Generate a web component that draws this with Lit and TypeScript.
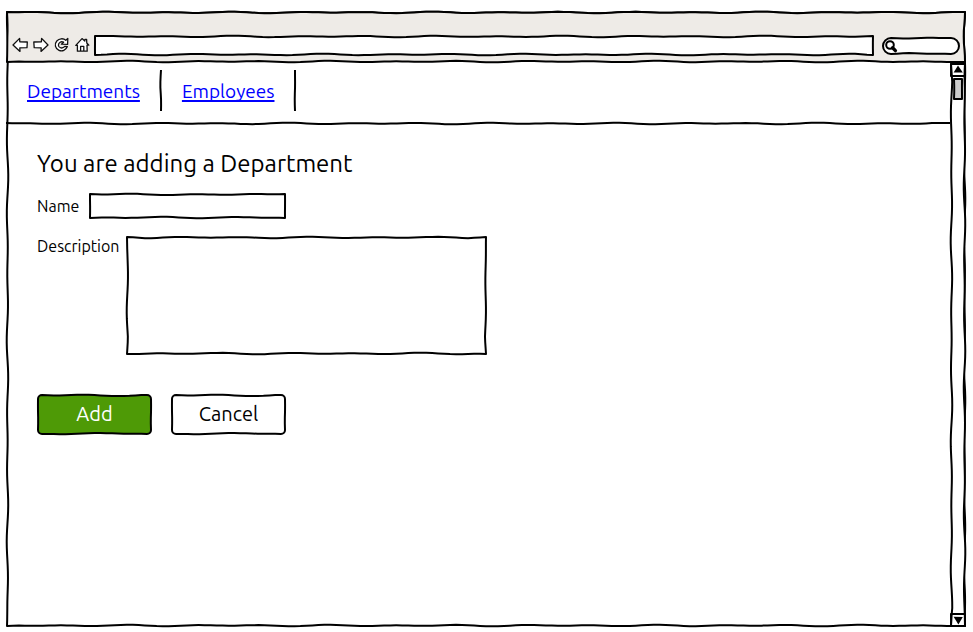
import { LitElement, html, svg, css, nothing } from "lit";
import { customElement, property, state } from "lit/decorators.js";

type Point = [number, number];

/** Points along a hand-drawn edge; the wobble fades out towards both ends. */
function wobble(from: Point, to: Point, seed: number): Point[] {
  const dx = to[0] - from[0];
  const dy = to[1] - from[1];
  const length = Math.hypot(dx, dy);
  if (length < 1) return [from, to];
  const steps = Math.max(2, Math.round(length / 6));
  const normal: Point = [-dy / length, dx / length];
  const amp = Math.min(0.8, length / 50);
  const points: Point[] = [];
  for (let i = 0; i <= steps; i++) {
    const s = (length * i) / steps;
    const fade = Math.min(1, s / 18, (length - s) / 18);
    const wave = 0.6 + 0.6 * Math.sin(s / 10.5 + seed) + 0.4 * Math.sin(s / 17 + seed * 2.3);
    const off = amp * fade * wave;
    points.push([from[0] + (dx * s) / length + normal[0] * off, from[1] + (dy * s) / length + normal[1] * off]);
  }
  return points;
}

const trace = (points: Point[]) => points.map(([x, y]) => `L${x.toFixed(2)} ${y.toFixed(2)}`).join("");

/** Box with a hand-drawn outline around its slotted content. */
@customElement("sketch-box")
export class SketchBox extends LitElement {
  @property() fill = "none";
  @property({ type: Number }) radius = 0;
  @property({ type: Number }) seed = 0;
  @property() shape: "box" | "row" | "column" = "box";
  @state() private w = 0;
  @state() private h = 0;

  private observer?: ResizeObserver;

  static styles = css`
    :host {
      display: block;
      position: relative;
      box-sizing: border-box;
    }
    .outline {
      position: absolute;
      inset: 0;
      width: 100%;
      height: 100%;
      overflow: visible;
      pointer-events: none;
      z-index: 0;
    }
    ::slotted(*) {
      position: relative;
      z-index: 1;
    }
  `;

  connectedCallback() {
    super.connectedCallback();
    this.observer = new ResizeObserver(() => {
      this.w = this.offsetWidth;
      this.h = this.offsetHeight;
    });
    this.observer.observe(this);
  }

  disconnectedCallback() {
    this.observer?.disconnect();
    super.disconnectedCallback();
  }

  private path(): string {
    const { w, h, radius: r, seed } = this;
    if (this.shape === "row") return "M" + trace(wobble([0, 1], [w, 1], seed)).slice(1);
    if (this.shape === "column") return "M" + trace(wobble([1, 0], [1, h], seed)).slice(1);
    const a = 1;
    const x = w - 1;
    const y = h - 1;
    const corner = (cx: number, cy: number) => (r ? `A${r} ${r} 0 0 1 ${cx} ${cy}` : "");
    return (
      `M${a + r} ${a}` +
      trace(wobble([a + r, a], [x - r, a], seed)) +
      corner(x, a + r) +
      trace(wobble([x, a + r], [x, y - r], seed + 3.6)) +
      corner(x - r, y) +
      trace(wobble([x - r, y], [a + r, y], seed + 1.7)) +
      corner(a, y - r) +
      trace(wobble([a, y - r], [a, a + r], seed + 0.8)) +
      corner(a + r, a) +
      "Z"
    );
  }

  render() {
    return html`
      ${this.w
        ? html`<svg class="outline" aria-hidden="true">
            ${svg`<path d=${this.path()} fill=${this.fill} stroke="#000" stroke-width="2" stroke-linejoin="round"></path>`}
          </svg>`
        : nothing}
      <slot></slot>
    `;
  }
}

const icons = [
  {
    label: "Back",
    art: svg`<path d="M1 8 L7.6 1.4 L7.8 4.8 L15.3 5 L15 10.6 L7.8 10.8 L8 14.4 Z"></path>`,
  },
  {
    label: "Forward",
    art: svg`<path d="M15 8 L8.6 1.4 L8.4 4.8 L0.8 5 L1.2 10.6 L8.2 10.8 L8 14.4 Z"></path>`,
  },
  {
    label: "Reload",
    art: svg`<path d="M13.8 1.4 L13.6 7.4 L7.4 7.2 L9.6 5.2 C7.2 4 4.4 5.4 4.4 8.2 C4.6 11.2 8.6 12 10.8 9.4 L13.4 9.6 C11.8 13.4 8.2 14.8 5 13.4 C1 11.6 0.2 7 2.8 4 C5.2 1.4 9.2 1 11.8 3.2 Z"></path>`,
  },
  {
    label: "Home",
    art: svg`<path d="M0.8 8.4 L7 1.6 L9.8 4 L10 2.4 L11.6 2.4 L11.8 6 L13.8 8.2 L12 8.2 L12.2 14.2 L2.4 14.2 L2.4 8.2 Z"></path><path d="M5.6 14 L5.6 9.4 L8.8 9.4 L8.8 14" fill="none"></path>`,
  },
];

@customElement("app-root")
export class AppRoot extends LitElement {
  static styles = css`
    :host {
      display: flex;
      flex-direction: column;
      box-sizing: border-box;
      min-height: 100vh;
      padding: 11px 7px 5px 6px;
      background: #fff;
      color: #000;
      font: 16px/22px Ubuntu, "Noto Sans", sans-serif;
    }
    *,
    *::before {
      box-sizing: border-box;
    }
    .window {
      flex: 1;
      display: flex;
      flex-direction: column;
    }
    .toolbar {
      display: flex;
      align-items: center;
      gap: 8px;
      padding: 24px 6px 7px;
    }
    .tools {
      display: flex;
      gap: 5px;
      margin-right: -5px;
      padding-bottom: 2px;
    }
    button,
    input,
    textarea {
      display: block;
      margin: 0;
      padding: 0;
      border: 0;
      outline: 0;
      background: none;
      color: inherit;
      font: inherit;
    }
    button {
      cursor: pointer;
    }
    .tool,
    .tool svg {
      display: block;
      width: 16px;
      height: 16px;
    }
    .tool svg {
      fill: #fff;
      stroke: #111;
      stroke-width: 1.3;
      stroke-linejoin: round;
    }
    .address {
      flex: 1;
      height: 21px;
    }
    .search {
      display: flex;
      width: 78px;
      height: 18px;
    }
    .search svg {
      flex: none;
      width: 16px;
      height: 18px;
    }
    .field {
      width: 100%;
      height: 100%;
      padding: 0 6px;
      resize: none;
    }
    .search .field {
      min-width: 0;
      padding: 0 4px;
    }
    .viewport {
      flex: 1;
      display: flex;
    }
    .page {
      flex: 1;
      min-width: 0;
    }
    .nav {
      display: flex;
      align-items: center;
      gap: 20px;
      height: 59px;
      padding: 0 21px 4px;
      font-size: 19px;
    }
    .nav a {
      color: #00f;
      text-decoration-thickness: 2px;
      text-decoration-skip-ink: none;
      text-underline-offset: 2px;
    }
    .divider {
      width: 2px;
      height: 41px;
    }
    .rule {
      height: 2px;
    }
    .content {
      padding: 24px 31px;
    }
    h1 {
      margin: 0 0 13px;
      font-size: 24px;
      line-height: 32px;
      font-weight: 400;
    }
    .row {
      display: flex;
      align-items: flex-start;
      gap: 6px;
      margin-bottom: 17px;
    }
    .row.short {
      align-items: center;
      gap: 10px;
    }
    .name {
      width: 197px;
      height: 26px;
    }
    .description {
      flex: 0 1 361px;
      height: 119px;
    }
    .row label {
      line-height: 20px;
    }
    .actions {
      display: flex;
      gap: 19px;
      margin-top: 39px;
    }
    .action {
      width: 115px;
      height: 41px;
      font-size: 20px;
    }
    .action button {
      width: 100%;
      height: 100%;
      padding-bottom: 2px;
    }
    .primary {
      color: #fff;
    }
    .scrollbar {
      display: flex;
      flex-direction: column;
      justify-content: space-between;
      width: 16px;
    }
    .step {
      width: 16px;
      height: 14px;
    }
    .step button,
    .step svg {
      display: block;
      width: 16px;
      height: 14px;
    }
    .thumb {
      width: 10px;
      height: 22px;
      margin: 1px 3px auto;
    }
  `;

  render() {
    return html`
      <sketch-box class="window" seed="2">
        <sketch-box class="toolbar" fill="#eeebe7" seed="2">
          <div class="tools">
            ${icons.map(
              (icon) => html`<button class="tool" aria-label=${icon.label}>
                <svg viewBox="0 0 16 16" aria-hidden="true">${icon.art}</svg>
              </button>`,
            )}
          </div>
          <sketch-box class="address" fill="#fff" seed="4">
            <input class="field" type="text" aria-label="Address" />
          </sketch-box>
          <sketch-box class="search" fill="#fff" radius="8" seed="1">
            <svg viewBox="0 0 16 18" aria-hidden="true">
              <circle cx="8" cy="8" r="3.8" fill="#fff" stroke="#000" stroke-width="2"></circle>
              <path d="M10.6 10.8 L13.4 13.6" stroke="#000" stroke-width="3.4" stroke-linecap="round"></path>
            </svg>
            <input class="field" type="search" aria-label="Search" />
          </sketch-box>
        </sketch-box>

        <div class="viewport">
          <div class="page">
            <nav class="nav">
              <a href="#departments">Departments</a>
              <sketch-box class="divider" shape="column" seed="1"></sketch-box>
              <a href="#employees">Employees</a>
              <sketch-box class="divider" shape="column" seed="4"></sketch-box>
            </nav>
            <sketch-box class="rule" shape="row" seed="3"></sketch-box>

            <main class="content">
              <h1>You are adding a Department</h1>
              <form @submit=${(e: Event) => e.preventDefault()}>
                <div class="row short">
                  <label for="name">Name</label>
                  <sketch-box class="name" fill="#fff" seed="1">
                    <input class="field" id="name" type="text" />
                  </sketch-box>
                </div>
                <div class="row">
                  <label for="description">Description</label>
                  <sketch-box class="description" fill="#fff" seed="0">
                    <textarea class="field" id="description"></textarea>
                  </sketch-box>
                </div>
                <div class="actions">
                  <sketch-box class="action primary" fill="#4e9a06" radius="4" seed="1">
                    <button type="submit">Add</button>
                  </sketch-box>
                  <sketch-box class="action" fill="#fff" radius="4" seed="1">
                    <button type="button">Cancel</button>
                  </sketch-box>
                </div>
              </form>
            </main>
          </div>

          <sketch-box class="scrollbar" fill="#fff" seed="5">
            <sketch-box class="step">
              <button aria-label="Scroll up">
                <svg viewBox="0 0 16 14" aria-hidden="true"><path d="M8 2.4 L12.8 9.4 L3.6 9.6 Z"></path></svg>
              </button>
            </sketch-box>
            <sketch-box class="thumb" fill="#ccc"></sketch-box>
            <sketch-box class="step">
              <button aria-label="Scroll down">
                <svg viewBox="0 0 16 14" aria-hidden="true"><path d="M3.6 3.8 L12.8 4 L8.4 11.4 Z"></path></svg>
              </button>
            </sketch-box>
          </sketch-box>
        </div>
      </sketch-box>
    `;
  }
}
